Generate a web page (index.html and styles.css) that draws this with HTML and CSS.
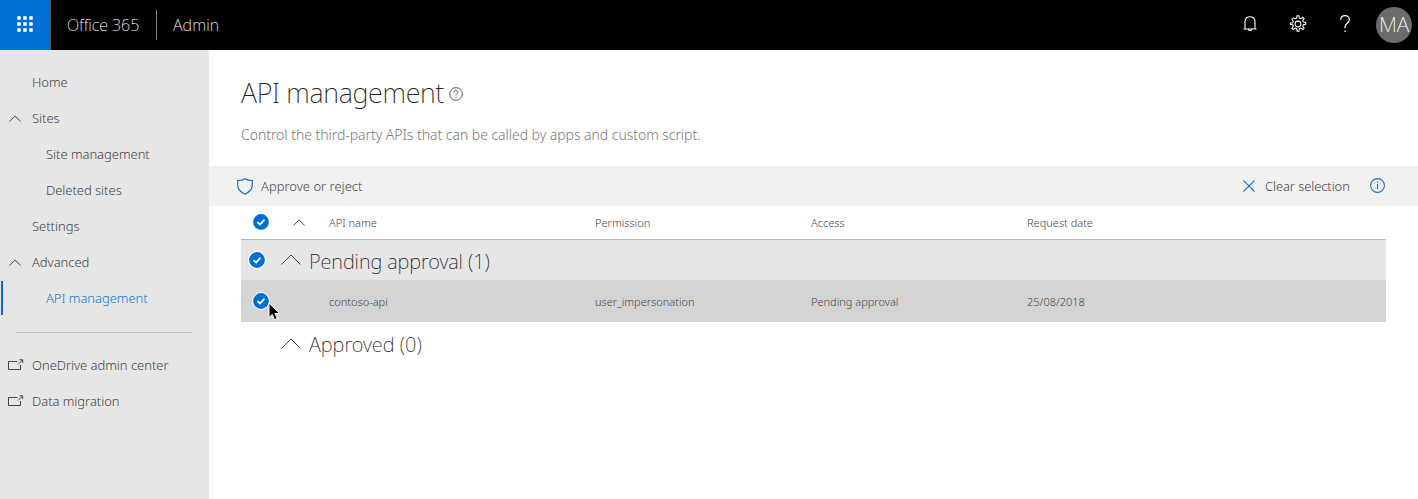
FILE: index.html
```html
<!DOCTYPE html>
<html lang="en">
<head>
<meta charset="utf-8">
<title>API management</title>
<link rel="stylesheet" href="styles.css">
</head>
<body>
<svg class="defs" width="0" height="0">
  <symbol id="chevron" viewBox="0 0 12 7"><path d="M.4 6.500 6 .9l5.600 5.600" fill="none" stroke="currentColor"/></symbol>
  <symbol id="chevron-lg" viewBox="0 0 20 11"><path d="M.5 10.500 10 1l9.500 9.500" fill="none" stroke="currentColor"/></symbol>
  <symbol id="check" viewBox="0 0 18 18"><circle cx="9" cy="9" r="9" fill="#fff"/><circle cx="9" cy="9" r="7.900" fill="#006fd2"/><path d="M5.400 9.200 8 11.500l4.500-4.800" fill="none" stroke="#fff" stroke-width="1.800"/></symbol>
  <symbol id="external" viewBox="0 0 16 12"><path d="M9.500 2.500h-9v8h12V6M10 5.500l4.500-4.500M11.500.8h3.200V4" fill="none" stroke="currentColor"/></symbol>
</svg>
<header class="topbar">
  <div class="launcher"><svg width="16" height="16" viewBox="0 0 16 16" stroke="#fff" stroke-width="3.400" stroke-dasharray="3.400 2.600"><path d="M.3 2h16M.3 8h16M.3 14h16"/></svg></div>
  <span class="suite">Office 365</span>
  <span class="app">Admin</span>
  <div class="actions">
    <svg class="bell" width="14" height="16" viewBox="0 0 14 16" fill="none" stroke="#fff" stroke-width="1.100"><path d="M.5 13h13M2 13V5.500C2 2.500 4 .8 7 .8s5 1.700 5 4.700V13M5.200 13c.2 2.200 3.400 2.200 3.600 0"/></svg>
    <svg class="gear" width="18" height="18" viewBox="0 0 18 18" fill="none" stroke="#fff" stroke-width="1.050"><path d="M7.700 3.100 8.100.7h1.800l.4 2.400 1.500.6 2-1.400 1.300 1.300-1.400 2 .6 1.500 2.400.4v1.800l-2.400.4-.6 1.500 1.400 2-1.300 1.300-2-1.400-1.500.6-.4 2.400H8.100l-.4-2.400-1.500-.6-2 1.400-1.300-1.300 1.400-2-.6-1.500-2.400-.4V8.200l2.400-.4.6-1.500-1.400-2L4.200 3l2 .7z"/><circle cx="9" cy="9" r="2.900"/></svg>
    <svg class="help" width="10" height="18" viewBox="0 0 10 18" fill="none" stroke="#fff" stroke-width="1.200"><path d="M.7 5C.7 2.200 2.300.7 5 .7s4.300 1.500 4.300 3.900C9.300 8.200 5 8.400 5 12.200v1M5 15.500V17"/></svg>
    <div class="avatar"><span>MA</span></div>
  </div>
</header>
<div class="layout">
  <nav class="sidebar">
    <a class="item">Home</a>
    <a class="item"><svg class="caret" width="12" height="7"><use href="#chevron"/></svg>Sites</a>
    <a class="item sub">Site management</a>
    <a class="item sub">Deleted sites</a>
    <a class="item">Settings</a>
    <a class="item"><svg class="caret" width="12" height="7"><use href="#chevron"/></svg>Advanced</a>
    <a class="item sub active">API management</a>
    <hr>
    <a class="item"><svg class="ext" width="16" height="12"><use href="#external"/></svg>OneDrive admin center</a>
    <a class="item"><svg class="ext" width="16" height="12"><use href="#external"/></svg>Data migration</a>
  </nav>
  <main class="content">
    <div class="title"><h1>API management</h1>
      <svg width="14" height="14" viewBox="0 0 14 14" fill="none" stroke="#555"><circle cx="7" cy="7" r="6.300"/><path d="M5 5.500C5 4 5.700 3.400 7 3.400s2 .7 2 1.700C9 6.600 7 6.700 7 8.400M7 9.500v1.200"/></svg></div>
    <p class="lead">Control the third-party APIs that can be called by apps and custom script.</p>
    <div class="toolbar">
      <svg width="16" height="17" viewBox="0 0 16 17" fill="none" stroke="#1b6fc9" stroke-width="1.200"><path d="M.7 2.700C3.500 2.700 6 2.200 8 .8c2 1.400 4.500 1.900 7.300 1.900V7.500c0 3.800-3.500 6.800-7.300 8.700C4.200 14.300.7 11.300.7 7.500z"/></svg>
      <span class="approve">Approve or reject</span>
      <svg class="clear-icon" width="12" height="12" viewBox="0 0 12 12" stroke="#1b6fc9" stroke-width="1.200"><path d="m.4.4 11.200 11.200M11.600.4.4 11.600"/></svg>
      <span class="clear">Clear selection</span>
      <svg class="info" width="15" height="15" viewBox="0 0 15 15" fill="none" stroke="#1b6fc9" stroke-width="1.100"><circle cx="7.500" cy="7.500" r="6.900"/><path d="M7.500 6v5M7.500 3.800V5"/></svg>
    </div>
    <div class="table">
      <div class="row head"><svg class="tick" width="18" height="18"><use href="#check"/></svg><svg class="sort" width="12" height="7"><use href="#chevron"/></svg><span>API name</span><span>Permission</span><span>Access</span><span>Request date</span></div>
      <div class="group selected"><svg class="tick" width="18" height="18"><use href="#check"/></svg><svg class="expand" width="20" height="11"><use href="#chevron-lg"/></svg><h2 class="pending">Pending approval (1)</h2></div>
      <div class="row record"><div class="tick-cell"><svg class="tick" width="18" height="18"><use href="#check"/></svg><svg class="cursor" width="13" height="19" viewBox="0 0 13 19"><path d="M1 1v14.500l3.300-3.100 2.200 5.300 2.700-1.100L7 11.500h4.700z" fill="#000" stroke="#fff"/></svg></div><i></i><span>contoso-api</span><span>user_impersonation</span><span>Pending approval</span><span>25/08/2018</span></div>
      <div class="group"><i class="tick"></i><svg class="expand" width="20" height="11"><use href="#chevron-lg"/></svg><h2>Approved (0)</h2></div>
    </div>
  </main>
</div>
</body>
</html>
```
FILE: styles.css
```css
* { box-sizing: border-box; }
body { margin: 0; height: 499px; overflow: hidden; background: #fff; color: #444; font: 300 13px "Noto Sans", "Open Sans", sans-serif; letter-spacing: -.04px; white-space: nowrap; }
.defs { display: none; }
svg { display: block; flex: none; }
.topbar { height: 50px; display: flex; align-items: center; background: #000; color: #fff; font-size: 16px; font-weight: 200; }
.launcher { width: 51px; height: 50px; padding: 16px 17px; background: #006fd2; border-right: 1px solid #555; }
.suite { width: 106px; height: 30px; padding-left: 16px; line-height: 31px; border-right: 1px solid #777; }
.app { padding-left: 16px; line-height: 29px; letter-spacing: .15px; }
.actions { margin-left: auto; display: flex; align-items: center; padding-right: 6px; }
.bell { margin-right: 32px; margin-top: -3px; }
.gear { margin-right: 33px; margin-top: -3px; }
.help { margin-right: 26px; margin-top: -3px; }
.avatar { width: 36px; height: 36px; border-radius: 50%; background: #6b6b6b; font-size: 21px; line-height: 35px; display: flex; justify-content: center; }
.layout { display: flex; height: 449px; }
.sidebar { width: 209px; background: #e6e6e6; padding-top: 14px; }
.item { display: flex; align-items: center; height: 36px; padding-left: 32px; }
.item svg { margin-right: 11px; }
.item .caret { margin-left: -23px; }
.item .ext { margin-left: -24px; margin-right: 8px; }
.item.sub { padding-left: 46px; }
.item.active { height: 34px; margin: 1px 0 1px 1px; padding-left: 43px; border-left: 2px solid #006fd2; color: #0f78d4; }
.sidebar hr { width: 176px; height: 1px; margin: 17px 16px 14px; border: 0; background: #c3c3c3; }
.content { flex: 1; padding-top: 20px; }
.title { display: flex; align-items: center; height: 46px; padding-left: 32px; color: #222; }
h1 { margin: -2px 0 0; font-size: 27px; font-weight: 200; letter-spacing: -.3px; }
.title svg { margin-left: 5px; margin-top: 1px; }
.lead { margin: 0; height: 50px; padding-left: 32px; line-height: 38px; font-size: 14px; color: #777; }
.toolbar { height: 40px; display: flex; align-items: center; padding: 0 33px 0 28px; background: #f1f1f1; }
.approve { margin-left: 8px; letter-spacing: 0; }
.clear-icon { margin-left: auto; }
.clear { width: 85px; margin-left: 10px; letter-spacing: -.1px; }
.info { margin-left: 20px; margin-top: -1px; }
.table { margin: 0 32px; font-size: 11px; letter-spacing: 0; }
.row { display: grid; grid-template-columns: 52px 36px 266px 216px 216px 1fr; align-items: center; height: 42px; }
.row .tick { margin-left: 11px; }
.head { height: 34px; border-bottom: 1px solid #bcbcbc; }
.head .tick, .head .sort { margin-top: -1px; }
.record { background: #d4d4d4; }
.tick-cell { position: relative; }
.cursor { position: absolute; left: 27px; top: 10px; }
.group { display: flex; align-items: center; height: 45px; }
.group.selected { height: 40px; background: #e6e6e6; }
.group .tick { width: 18px; margin-left: 7px; }
.expand { margin-left: 15px; margin-top: -2px; }
h2 { margin: 0 0 0 8px; font-size: 20px; font-weight: 200; color: #222; }
.pending { margin-top: 2px; letter-spacing: -.08px; }
```
